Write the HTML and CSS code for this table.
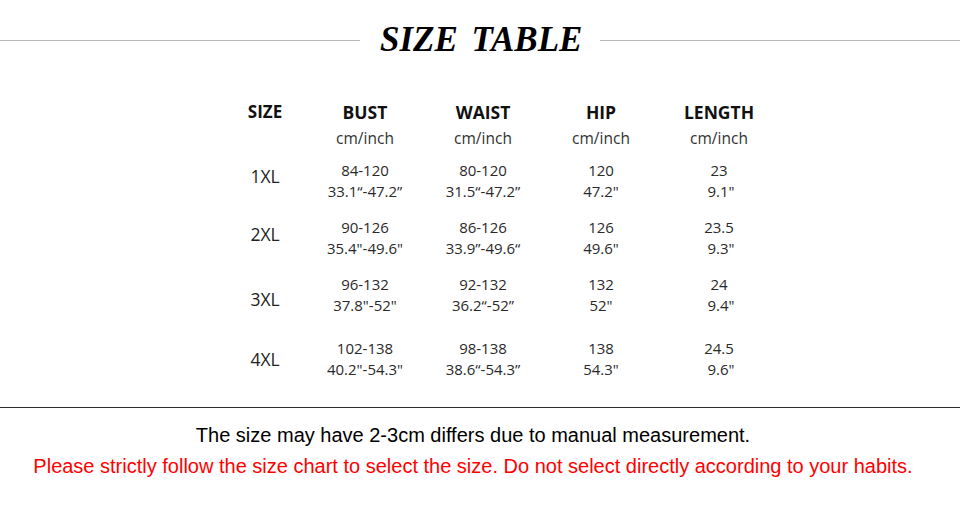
FILE: index.html
```html
<!DOCTYPE html>
<html>
<head>
<meta charset="utf-8">
<link rel="stylesheet" href="styles.css">
</head>
<body>
<div class="page">
  <div class="title-row">
    <div class="rule"></div>
    <h1 class="title">SIZE TABLE</h1>
    <div class="rule"></div>
  </div>

  <div class="table">
    <div class="head size-col"><div class="h1 small">SIZE</div></div>
    <div class="head"><div class="h1">BUST</div><div class="h2">cm/inch</div></div>
    <div class="head"><div class="h1">WAIST</div><div class="h2">cm/inch</div></div>
    <div class="head"><div class="h1">HIP</div><div class="h2">cm/inch</div></div>
    <div class="head"><div class="h1">LENGTH</div><div class="h2">cm/inch</div></div>

    <div class="label r1">1XL</div>
    <div class="cell"><div>84-120</div><div>33.1“-47.2”</div></div>
    <div class="cell"><div>80-120</div><div>31.5“-47.2”</div></div>
    <div class="cell"><div>120</div><div>47.2"</div></div>
    <div class="cell"><div>23</div><div class="nudge">9.1"</div></div>

    <div class="label r2">2XL</div>
    <div class="cell"><div>90-126</div><div>35.4"-49.6"</div></div>
    <div class="cell"><div>86-126</div><div>33.9”-49.6“</div></div>
    <div class="cell"><div>126</div><div>49.6"</div></div>
    <div class="cell"><div>23.5</div><div class="nudge">9.3"</div></div>

    <div class="label r3">3XL</div>
    <div class="cell"><div>96-132</div><div>37.8"-52"</div></div>
    <div class="cell"><div>92-132</div><div>36.2“-52”</div></div>
    <div class="cell"><div>132</div><div>52"</div></div>
    <div class="cell"><div>24</div><div class="nudge">9.4"</div></div>

    <div class="label r4">4XL</div>
    <div class="cell last"><div>102-138</div><div>40.2"-54.3"</div></div>
    <div class="cell last"><div>98-138</div><div>38.6“-54.3”</div></div>
    <div class="cell last"><div>138</div><div>54.3"</div></div>
    <div class="cell last"><div>24.5</div><div class="nudge">9.6"</div></div>
  </div>

  <div class="divider"></div>

  <div class="notes">
    <p class="note">The size may have 2-3cm differs due to manual measurement.</p>
    <p class="note red">Please strictly follow the size chart to select the size. Do not select directly according to your habits.</p>
  </div>
</div>
</body>
</html>
```

FILE: styles.css
```css
html, body {
  margin: 0;
  padding: 0;
  background: #fff;
}
.page {
  width: 960px;
  height: 506px;
  overflow: hidden;
}
.title-row {
  height: 80px;
  display: flex;
  align-items: center;
  gap: 20px;
}
.rule {
  flex: 1;
  height: 1px;
  background: #b8b8b8;
}
.title {
  margin: 0;
  width: 200px;
  font-family: "Liberation Serif", "DejaVu Serif", serif;
  font-style: italic;
  font-weight: bold;
  font-size: 35px;
  letter-spacing: 0;
  word-spacing: 5px;
  color: #000;
  line-height: 40px;
  white-space: nowrap;
  text-align: center;
}
.table {
  margin: 19px 0 0 224px;
  display: grid;
  grid-template-columns: 82px 118px 118px 118px 118px;
  row-gap: 15px;
  font-family: "Open Sans", "Noto Sans", sans-serif;
  color: #222;
  text-align: center;
}
.head {
  margin-bottom: -6.5px;
}
.h1 {
  font-weight: bold;
  font-size: 17.5px;
  line-height: 26px;
  color: #111;
}
.h1.small {
  font-size: 17px;
}
.h2 {
  font-size: 15.5px;
  line-height: 26px;
  color: #333;
}
.cell {
  font-size: 15px;
  line-height: 21px;
  color: #2a2a2a;
}
.nudge {
  padding-left: 4px;
}
.label {
  font-size: 17.5px;
  line-height: 21px;
  align-self: center;
  color: #222;
}
.r1 { margin-top: -9px; }
.r2 { margin-top: -6px; }
.r3 { margin-top: 10px; }
.r4 { margin-top: 9px; }
.last {
  margin-top: 7px;
}
.divider {
  margin-top: 27.5px;
  height: 1px;
  background: #2e2e2e;
}
.notes {
  margin-top: 11.5px;
  padding-right: 14px;
  text-align: center;
  font-family: "Liberation Sans", Arial, sans-serif;
}
.note {
  margin: 0;
  font-size: 20px;
  line-height: 31px;
  color: #000;
  white-space: nowrap;
}
.note.red {
  color: #f00;
}
```
